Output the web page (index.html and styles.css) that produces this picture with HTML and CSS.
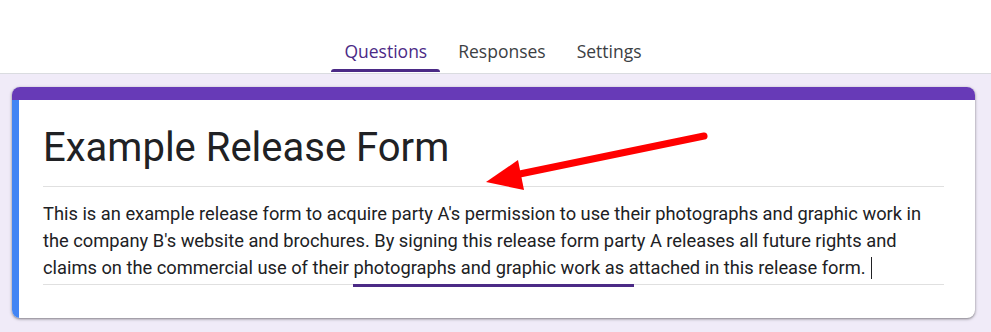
FILE: index.html
```html
<!DOCTYPE html>
<html lang="en">
<head>
    <meta charset="UTF-8">
    <meta name="viewport" content="width=device-width, initial-scale=1.0">
    <title>Example Release Form - Google Forms</title>
    <link rel="stylesheet" href="styles.css">
</head>
<body>
    <header class="form-header">
        <nav class="tabs">
            <a class="tab tab-active" href="#">Questions</a>
            <a class="tab" href="#">Responses</a>
            <a class="tab" href="#">Settings</a>
        </nav>
    </header>

    <main class="form-main">
        <section class="form-card">
            <div class="card-band"></div>
            <div class="card-body">
                <h1 class="form-title">Example Release Form</h1>
                <div class="form-desc">
                    <p>This is an example release form to acquire party A's permission to use their photographs and graphic work in the company B's website and brochures. By signing this release form party A releases all future rights and claims on the commercial use of their photographs and graphic work as attached in this release form.<span class="caret"></span></p>
                    <div class="desc-line"><span class="desc-focus"></span></div>
                </div>
            </div>
        </section>
    </main>

    <!-- annotation arrow -->
    <svg class="annotation" width="991" height="332" viewBox="0 0 991 332">
        <line x1="704" y1="136" x2="510" y2="176" stroke="#ff0000" stroke-width="7" stroke-linecap="round"/>
        <polygon points="486,182 518,160 524,190" fill="#ff0000"/>
    </svg>
</body>
</html>
```

FILE: styles.css
```css
* {
    margin: 0;
    padding: 0;
    box-sizing: border-box;
}

body {
    font-family: Roboto, "Liberation Sans", Arial, sans-serif;
    background: #f0ebf8;
    color: #202124;
    width: 991px;
    height: 332px;
    overflow: hidden;
    position: relative;
}

.form-header {
    background: white;
    height: 74px;
    border-bottom: 1px solid #dadce0;
    display: flex;
    justify-content: center;
    align-items: flex-end;
}

.tabs {
    display: flex;
    gap: 5px;
    margin-left: -5px;
}

.tab {
    font-family: "Open Sans", Roboto, sans-serif;
    font-size: 17.5px;
    font-weight: 500;
    line-height: 24px;
    color: #3c4043;
    text-decoration: none;
    padding: 14px 13px 0;
    height: 48px;
    display: block;
    position: relative;
}

.tab-active {
    color: #4b2a86;
}

.tab-active::after {
    content: "";
    position: absolute;
    left: 0;
    right: 0;
    bottom: 1px;
    height: 3px;
    background: #4b2a86;
    border-radius: 3px 3px 0 0;
}

.form-main {
    padding: 13px 16px 0 12px;
}

.form-card {
    background: white;
    border-radius: 8px;
    overflow: hidden;
    box-shadow: 0 1px 2px rgba(0,0,0,0.3), 0 1px 3px 1px rgba(0,0,0,0.15);
}

.card-band {
    height: 13px;
    background: #673ab7;
}

.card-body {
    border-left: 7px solid #4285f4;
    padding: 23px 31px 32px 24px;
}

.form-title {
    font-size: 40px;
    font-weight: 400;
    line-height: 50px;
    color: #202124;
    padding-bottom: 13px;
    border-bottom: 1px solid #e0e0e0;
}

.form-desc {
    margin-top: 13px;
}

.form-desc p {
    font-size: 18.3px;
    line-height: 27px;
    color: #202124;
}

.caret {
    display: inline-block;
    width: 1px;
    height: 22px;
    background: #202124;
    margin-left: 5px;
    vertical-align: -5px;
}

.desc-line {
    height: 2px;
    border-top: 1px solid #e0e0e0;
    margin-top: 3px;
    position: relative;
}

.desc-focus {
    position: absolute;
    left: 310px;
    width: 281px;
    top: -1px;
    height: 3px;
    background: #4b2a86;
}

.annotation {
    position: absolute;
    left: 0;
    top: 0;
    pointer-events: none;
}
```
